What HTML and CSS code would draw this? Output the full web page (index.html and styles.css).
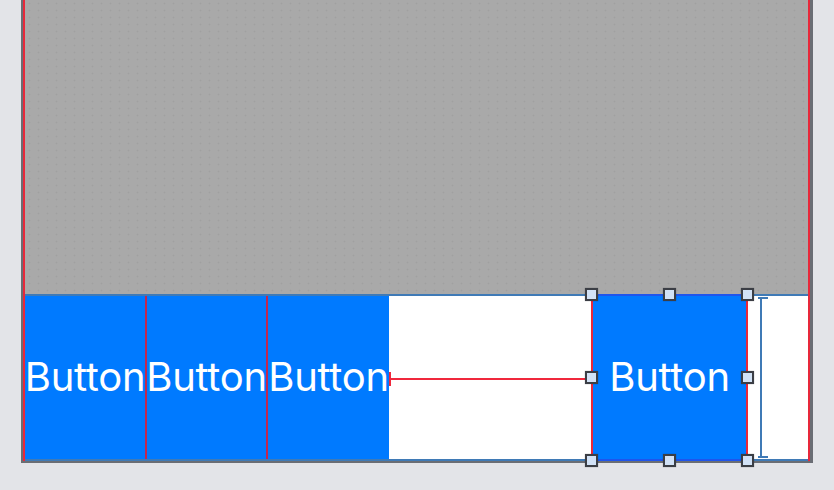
FILE: index.html
```html
<!DOCTYPE html>
<html lang="en">
<head>
  <meta charset="UTF-8" />
  <title>Stack View Layout</title>
  <link rel="stylesheet" href="styles.css">
</head>
<body>
  <div class="canvas">
    <div class="inner">
      <!-- Top view (gray) -->
      <div class="top-view"></div>

      <!-- Bottom stack of buttons -->
      <div class="stack">
        <div class="btn btn-first">Button</div>
        <div class="btn btn-second">Button</div>
        <div class="btn btn-third">Button</div>

        <!-- Spacing constraint to the selected button -->
        <div class="spacer">
          <div class="constraint"></div>
        </div>

        <!-- Selected button with handles -->
        <div class="btn btn-selected">
          Button
          <div class="selection">
            <span class="handle h-tl"></span>
            <span class="handle h-tm"></span>
            <span class="handle h-tr"></span>
            <span class="handle h-ml"></span>
            <span class="handle h-mr"></span>
            <span class="handle h-bl"></span>
            <span class="handle h-bm"></span>
            <span class="handle h-br"></span>
          </div>
        </div>

        <div class="gap"></div>
        <div class="bracket"></div>
        <div class="tail"></div>
      </div>
    </div>
  </div>
</body>
</html>
```

FILE: styles.css
```css
/* Base */
body {
  margin: 0;
  background: #e3e4e8;
  font-family: Inter, 'Noto Sans', sans-serif;
  height: 490px;
  overflow: hidden;
}
*, *::before, *::after {
  box-sizing: border-box;
}

/* Canvas frame */
.canvas {
  margin-left: 21px;
  width: 792px;
  height: 463px;
  border-left: 2px solid #6a6d74;
  border-right: 3px solid #6a6d74;
  border-bottom: 2px solid #6a6d74;
}
.inner {
  height: 100%;
  border-left: 2px solid #e8283a;
  border-right: 2px solid #e8283a;
  display: flex;
  flex-direction: column;
}

/* Gray top view with a faint speckle */
.top-view {
  height: 294px;
  background-color: #a9a9a9;
  background-image: radial-gradient(circle, rgba(0, 0, 0, 0.05) 0.7px, transparent 1.2px);
  background-size: 9px 7px;
}

/***** Stack *****/
.stack {
  height: 167px;
  display: flex;
  background: #ffffff;
  border-top: 2px solid #3f7ab6;
  border-bottom: 2px solid #3f7ab6;
}

.btn {
  background: #007aff;
  color: #ffffff;
  font-size: 40px;
  letter-spacing: -0.3px;
  white-space: nowrap;
  display: flex;
  align-items: center;
  justify-content: center;
  padding-bottom: 2px;
}
.btn-first {
  width: 122px;
  border-right: 2px solid #c2274f;
}
.btn-second {
  width: 121px;
  border-right: 2px solid #c2274f;
}
.btn-third {
  width: 121px;
}

.spacer {
  width: 202px;
  display: flex;
  align-items: center;
  padding-top: 2px;
}
.constraint {
  width: 100%;
  height: 14px;
  border-left: 2px solid #f0283c;
  background: linear-gradient(#f0283c, #f0283c) center / 100% 2px no-repeat;
}

/* Selected button */
.btn-selected {
  position: relative;
  width: 157px;
}
.selection {
  position: absolute;
  top: -2px;
  bottom: -2px;
  left: 0;
  right: 0;
  border-top: 2px solid #1f55ec;
  border-bottom: 2px solid #1f55ec;
  border-left: 2px solid #e8283a;
  border-right: 2px solid #e8283a;
}
.handle {
  position: absolute;
  width: 13px;
  height: 13px;
  background: #d2e2f6;
  border: 2px solid #3b3e45;
  box-shadow: 0 0 1px rgba(0, 0, 0, 0.4);
}
.h-tl { top: -8px; left: -8px; }
.h-tm { top: -8px; left: calc(50% - 7px); }
.h-tr { top: -8px; right: -8px; }
.h-ml { top: calc(50% - 7px); left: -8px; }
.h-mr { top: calc(50% - 7px); right: -8px; }
.h-bl { bottom: -8px; left: -8px; }
.h-bm { bottom: -8px; left: calc(50% - 7px); }
.h-br { bottom: -8px; right: -8px; }

/* Trailing area */
.gap {
  width: 10px;
}
.bracket {
  width: 10px;
  margin: 1px 0;
  background:
    linear-gradient(#3f7ab6, #3f7ab6) 2px 0 / 2px 100% no-repeat,
    linear-gradient(#3f7ab6, #3f7ab6) 0 0 / 100% 2px no-repeat,
    linear-gradient(#3f7ab6, #3f7ab6) 0 100% / 100% 2px no-repeat;
}
.tail {
  width: 40px;
}
```
